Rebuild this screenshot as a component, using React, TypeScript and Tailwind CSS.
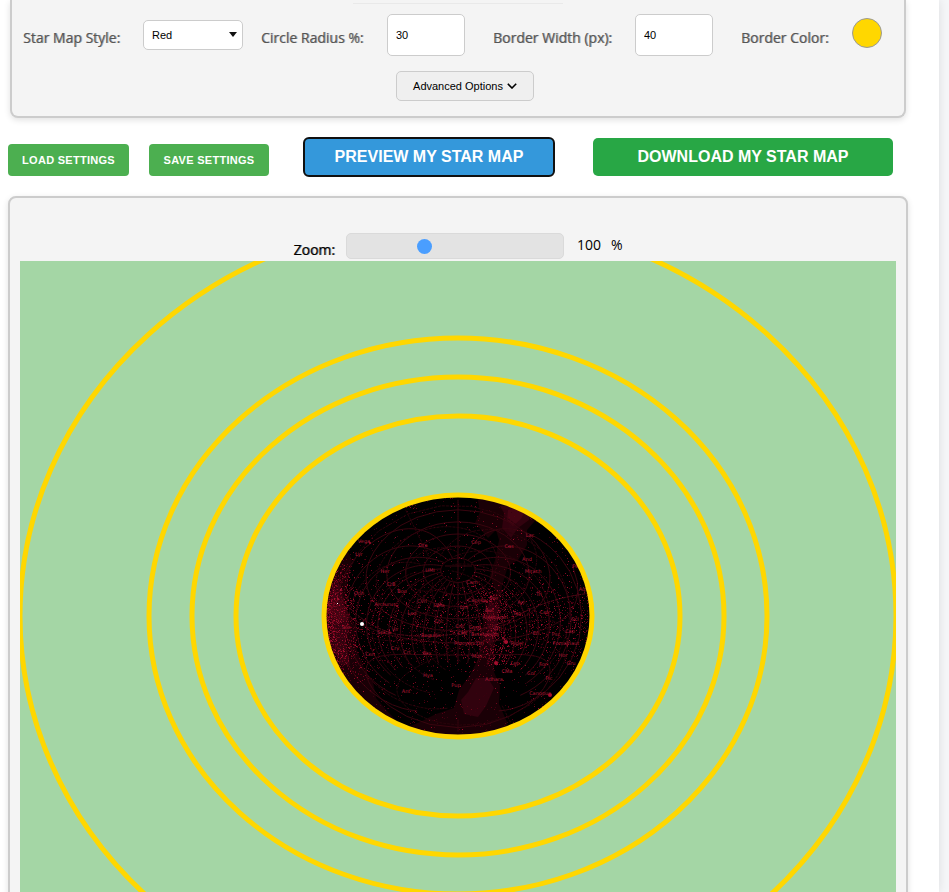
import { useState } from "react";
import type { ReactNode } from "react";

const CX = 458;
const CY = 616;
const RX = 134;
const RY = 121;

const rings = [
  { rx: 438, ry: 398 },
  { rx: 309, ry: 278 },
  { rx: 266, ry: 239 },
  { rx: 222, ry: 200 },
];

const skyLabels: [string, number, number][] = [
  ["Dra", 423, 545], ["Lyr", 359, 554], ["Her", 385, 571], ["UMi", 430, 570], ["CrB", 391, 584],
  ["Boo", 402, 591], ["Oph", 359, 593], ["UMa", 439, 605], ["CVn", 422, 601], ["Arcturus", 385, 604],
  ["Vega", 364, 541], ["Cep", 476, 542], ["Cas", 509, 546], ["Lac", 530, 535], ["And", 527, 559],
  ["Mirach", 533, 571], ["Peg", 577, 566], ["Cam", 472, 582], ["Per", 494, 598], ["Tri", 539, 594],
  ["Aqr", 583, 589], ["Ari", 521, 602], ["Aur", 489, 610], ["Tau", 517, 613], ["Cet", 544, 612],
  ["Lyn", 464, 607], ["Capella", 477, 600], ["Leo", 412, 613], ["Vir", 395, 629], ["Crv", 395, 648],
  ["Crt", 407, 652], ["Sex", 427, 653], ["Cen", 370, 654], ["Hya", 428, 675], ["Ant", 406, 691],
  ["Pup", 456, 685], ["Cnc", 439, 621], ["Regulus", 431, 635], ["Sco", 346, 627], ["Spica", 384, 632],
  ["Cnc", 460, 626], ["Gem", 475, 627], ["Aldebaran", 495, 617], ["Ori", 498, 628], ["CMi", 462, 633],
  ["Betelgeuse", 485, 634], ["Procyon", 464, 643], ["Ori", 480, 643], ["Rigel", 517, 643],
  ["Mon", 477, 656], ["Lep", 515, 663], ["CMa", 507, 671], ["Adhara", 494, 679], ["Eri", 536, 633],
  ["For", 543, 664], ["Col", 531, 673], ["Hor", 563, 655], ["Cap", 570, 631], ["Fomalhaut", 566, 643],
  ["Gru", 571, 663], ["Canopus", 540, 693], ["Pic", 549, 678], ["Scl", 575, 619], ["Psc", 556, 634],
];

type Star = { x: number; y: number; color: string };

// Small seeded generator so the star field is the same on every render.
function makeStars(): Star[] {
  let seed = 7331;
  const next = () => {
    seed = (seed * 1664525 + 1013904223) % 4294967296;
    return seed / 4294967296;
  };
  const shades = ["#38000e", "#520012", "#6e061a", "#870a24", "#a00f2e"];
  const stars: Star[] = [];
  const add = (x: number, y: number, lift: number) => {
    const dx = (x - CX) / RX;
    const dy = (y - CY) / RY;
    if (dx * dx + dy * dy < 1) {
      const shade = Math.min(4, Math.floor(next() * next() * 5 + lift));
      stars.push({ x: Math.round(x), y: Math.round(y), color: shades[shade] });
    }
  };
  for (let i = 0; i < 1400; i++) add(CX + (next() * 2 - 1) * RX, CY + (next() * 2 - 1) * RY, 0);
  for (let i = 0; i < 2100; i++) {
    add(CX + (next() * 2 - 1) * RX, 622 + (next() + next() + next() - 1.5) * 50, 0.5);
  }
  for (let i = 0; i < 1300; i++) {
    const y = 555 + (next() + next()) * 65;
    add(326 + next() * next() * 36 + Math.max(0, y - 640) * 0.4, y, 1.1);
  }
  for (let i = 0; i < 460; i++) add(494 + (next() + next() - 1) * 22, 590 + next() * 75, 1);
  return stars;
}

const stars = makeStars();

const RAD = Math.PI / 180;

// Azimuthal equidistant projection of a point on the sphere, centred on the map.
function project(dec: number, ha: number, tilt: number, spin: number): string | null {
  const d = dec * RAD;
  const h = ha * RAD;
  const t = tilt * RAD;
  const cosC = Math.sin(t) * Math.sin(d) + Math.cos(t) * Math.cos(d) * Math.cos(h);
  const c = Math.acos(Math.max(-1, Math.min(1, cosC)));
  if (c > 174 * RAD) return null;
  const k = (c < 0.001 ? 1 : c / Math.sin(c)) / Math.PI;
  const x = -k * Math.cos(d) * Math.sin(h);
  const y = k * (Math.cos(t) * Math.sin(d) - Math.sin(t) * Math.cos(d) * Math.cos(h));
  const s = spin * RAD;
  const px = CX + RX * (x * Math.cos(s) - y * Math.sin(s));
  const py = CY - RY * (x * Math.sin(s) + y * Math.cos(s));
  return `${px.toFixed(1)} ${py.toFixed(1)}`;
}

function skyGrid(tilt: number, spin: number, decStep: number, haStep: number): string {
  let d = "";
  const trace = (points: (string | null)[]) => {
    let open = false;
    for (const p of points) {
      if (p) d += (open ? "L" : "M") + p;
      open = p !== null;
    }
  };
  for (let dec = 90 - decStep; dec > -50; dec -= decStep) {
    const line: (string | null)[] = [];
    for (let ha = 0; ha <= 360; ha += 4) line.push(project(dec, ha, tilt, spin));
    trace(line);
  }
  for (let ha = 0; ha < 360; ha += haStep) {
    const line: (string | null)[] = [];
    for (let dec = -48; dec <= 72; dec += 3) line.push(project(dec, ha, tilt, spin));
    trace(line);
  }
  return d;
}

const equatorialGrid = skyGrid(22, 0, 18, 15);
const eclipticGrid = skyGrid(14, 24, 30, 30);

function StarMap() {
  return (
    <svg viewBox="20 261 876 710" className="block w-full" role="img" aria-label="Star map preview">
      <defs>
        <clipPath id="sky">
          <ellipse cx={CX} cy={CY} rx={RX} ry={RY} />
        </clipPath>
      </defs>
      <rect x="20" y="261" width="876" height="710" fill="#a4d6a5" />
      <g fill="none" stroke="#ffd700" strokeWidth="5">
        {rings.map((r) => (
          <ellipse key={r.rx} cx={CX} cy={CY} rx={r.rx} ry={r.ry} />
        ))}
      </g>
      <g clipPath="url(#sky)">
        <rect x="320" y="490" width="280" height="250" fill="#000000" />
        <g fill="#1a0006">
          <path d="M477 495 480 512 475 523 488 538 496 530 499 540 495 560 490 575 496 592 485 606 482 630 480 655 470 675 459 690 454 708 436 714 420 722 405 728 425 745 510 745 507 722 499 704 500 686 494 672 494 650 497 630 500 605 502 586 508 566 518 560 527 545 527 530 540 515 528 497Z" />
          <path d="M345 545 352 560 348 580 345 605 355 625 357 650 364 668 373 682 376 698 388 712 400 724 370 708 340 680 320 640 320 580Z" />
        </g>
        <g fill="#31020e">
          <path d="M500 506 504 513 502 528 511 538 518 528 529 520 531 508 518 506Z" />
          <path d="M489 602 486 618 488 630 484 640 490 646 497 632 498 606Z" />
          <path d="M476 678 468 692 461 700 464 714 478 717 486 706 494 688 488 678Z" />
          <path d="M336 575 328 600 330 622 332 645 341 665 350 665 346 640 350 625 345 610 342 590Z" />
        </g>
        <g fill="#4a0614" opacity="0.7">
          <path d="M508 510 507 520 513 526 521 519 525 511 515 508Z" />
          <path d="M333 590 330 608 336 625 350 618 346 608 340 600Z" />
        </g>
        <g fill="none" strokeWidth="1">
          <path d={equatorialGrid} stroke="#39050f" />
          <path d={eclipticGrid} stroke="#2a030b" strokeDasharray="3 1" />
          <path d="M445 566H472M458 554V580" stroke="#39050f" />
          <path d="M326 575Q350 622 395 634Q450 642 510 620Q545 598 592 593" stroke="#5a0a1a" strokeDasharray="3 1" />
        </g>
        <g shapeRendering="crispEdges">
          {stars.map((s, i) => (
            <rect key={i} x={s.x} y={s.y} width="1" height="1" fill={s.color} />
          ))}
        </g>
        <g className="text-[5px]" fill="#b01836" textAnchor="middle" fontFamily="'DejaVu Sans', sans-serif">
          {skyLabels.map(([name, x, y], i) => (
            <text key={i} x={x} y={y + 2}>
              {name}
            </text>
          ))}
        </g>
        <g fill="#a50e2d">
          <circle cx="370" cy="543" r="1" />
          <circle cx="397" cy="606" r="1" />
          <circle cx="506" cy="642" r="2" />
          <circle cx="496" cy="663" r="2" />
          <circle cx="550" cy="695" r="2" />
          <circle cx="503" cy="638" r="1" />
          <circle cx="487" cy="602" r="1" />
          <circle cx="338" cy="599" r="1" />
        </g>
        <rect x="337" y="603" width="1" height="1" fill="#ffffff" />
        <circle cx="362" cy="624" r="2" fill="#ffffff" />
      </g>
      <ellipse cx={CX} cy={CY} rx={RX} ry={RY} fill="none" stroke="#ffd700" strokeWidth="5" />
    </svg>
  );
}

function FieldLabel({ htmlFor, children }: { htmlFor: string; children: ReactNode }) {
  return (
    <label
      htmlFor={htmlFor}
      className="mt-[6px] text-sm leading-5 whitespace-nowrap text-[#555] [text-shadow:1px_0_0_rgba(85,85,85,0.5)]"
    >
      {children}
    </label>
  );
}

const numberBox =
  "h-[42px] w-[78px] rounded-[5px] border border-[#ccc] bg-white px-2 font-['Liberation_Sans',sans-serif] text-[11px] text-black outline-none";

const settingsButton =
  "h-8 rounded bg-[#4caf50] font-['Liberation_Sans',sans-serif] text-[11px] font-bold tracking-wide text-white";

export default function App() {
  const [style, setStyle] = useState("Red");
  const [radius, setRadius] = useState("30");
  const [border, setBorder] = useState("40");
  const [zoom, setZoom] = useState(100);

  return (
    <div className="h-screen overflow-hidden bg-[#f5f6f8] pr-[10px] font-['Open_Sans',sans-serif]">
      <main className="h-full overflow-hidden bg-white pr-[31px] pl-2 shadow-[0_0_10px_rgba(0,0,0,0.1)]">
        <section className="mx-[2px] h-[118px] rounded-b-lg border-2 border-t-0 border-[#ccc] bg-[#f4f4f4] shadow-[0_2px_6px_rgba(0,0,0,0.12)]">
          <hr className="mx-auto h-1 w-[210px] border-0 border-b border-[#e9e9e9]" />
          <div className="mt-[6px] flex h-[52px] items-center justify-between pr-[22px] pb-[2px] pl-[11px]">
            <div className="flex w-[220px] items-center justify-between">
              <FieldLabel htmlFor="map-style">Star Map Style:</FieldLabel>
              <div className="relative">
                <select
                  id="map-style"
                  value={style}
                  onChange={(e) => setStyle(e.target.value)}
                  className="block h-[30px] w-[100px] appearance-none rounded-[5px] border border-[#ccc] bg-white px-2 font-['Liberation_Sans',sans-serif] text-[11px] text-black"
                >
                  <option>Red</option>
                  <option>Blue</option>
                </select>
                <svg viewBox="0 0 8 5" className="pointer-events-none absolute top-3 right-[6px] w-2">
                  <path d="M0 0h8L4 5Z" fill="#111" />
                </svg>
              </div>
            </div>
            <div className="flex w-[204px] items-center justify-between">
              <FieldLabel htmlFor="radius">Circle Radius %:</FieldLabel>
              <input id="radius" className={numberBox} value={radius} onChange={(e) => setRadius(e.target.value)} />
            </div>
            <div className="ml-[10px] flex w-[220px] items-center justify-between">
              <FieldLabel htmlFor="border-width">Border Width (px):</FieldLabel>
              <input id="border-width" className={numberBox} value={border} onChange={(e) => setBorder(e.target.value)} />
            </div>
            <div className="ml-[10px] flex w-[141px] items-center justify-between">
              <FieldLabel htmlFor="border-color">Border Color:</FieldLabel>
              <button id="border-color" className="mb-1 h-[30px] w-[30px] rounded-full border border-[#999] bg-[#ffd700]" />
            </div>
          </div>
          <div className="mt-[9px] flex justify-center pl-[14px]">
            <button className="flex h-[30px] w-[138px] items-center justify-center gap-1 rounded-[5px] border border-[#ccc] bg-[#efefef] font-['Liberation_Sans',sans-serif] text-[11px] text-black">
              Advanced Options
              <svg viewBox="0 0 10 6" className="w-[10px]" fill="none" stroke="#000" strokeWidth="1.6">
                <path d="M.8.8 5 5 9.2.8" />
              </svg>
            </button>
          </div>
        </section>

        <div className="mt-[19px] flex h-10 items-start pr-[7px]">
          <button className={`${settingsButton} mt-[7px] w-[121px]`}>LOAD SETTINGS</button>
          <button className={`${settingsButton} mt-[7px] ml-5 w-[120px]`}>SAVE SETTINGS</button>
          <button className="ml-[34px] h-10 w-[252px] rounded-md border-2 border-[#101010] bg-[#3498db] font-['Liberation_Sans',sans-serif] text-base font-bold text-white">
            PREVIEW MY STAR MAP
          </button>
          <button className="mt-px ml-[38px] h-[38px] w-[300px] rounded-[5px] bg-[#28a745] font-['Liberation_Sans',sans-serif] text-base font-bold text-white">
            DOWNLOAD MY STAR MAP
          </button>
        </div>

        <section className="mt-[19px] rounded-lg border-2 border-[#ccc] bg-[#f4f4f4] px-[10px] pt-[35px] pb-[10px] shadow-[0_2px_6px_rgba(0,0,0,0.12)]">
          <div className="flex h-7 items-start justify-center text-sm leading-5 text-black">
            <label htmlFor="zoom" className="mt-[7px] [text-shadow:1px_0_0_rgba(0,0,0,0.5)]">
              Zoom:
            </label>
            <input
              id="zoom"
              type="range"
              min="0"
              max="286"
              value={zoom}
              onChange={(e) => setZoom(Number(e.target.value))}
              className="ml-[11px] h-[26px] w-[218px] appearance-none rounded-[5px] border border-[#dadada] bg-[#e3e3e3] [&::-webkit-slider-thumb]:h-[15px] [&::-webkit-slider-thumb]:w-[15px] [&::-webkit-slider-thumb]:appearance-none [&::-webkit-slider-thumb]:rounded-full [&::-webkit-slider-thumb]:bg-[#4a9eff]"
            />
            <output className="mt-[2px] ml-[13px]">{zoom}</output>
            <span className="mt-[2px] ml-[10px]">%</span>
          </div>
          <StarMap />
        </section>
      </main>
    </div>
  );
}
